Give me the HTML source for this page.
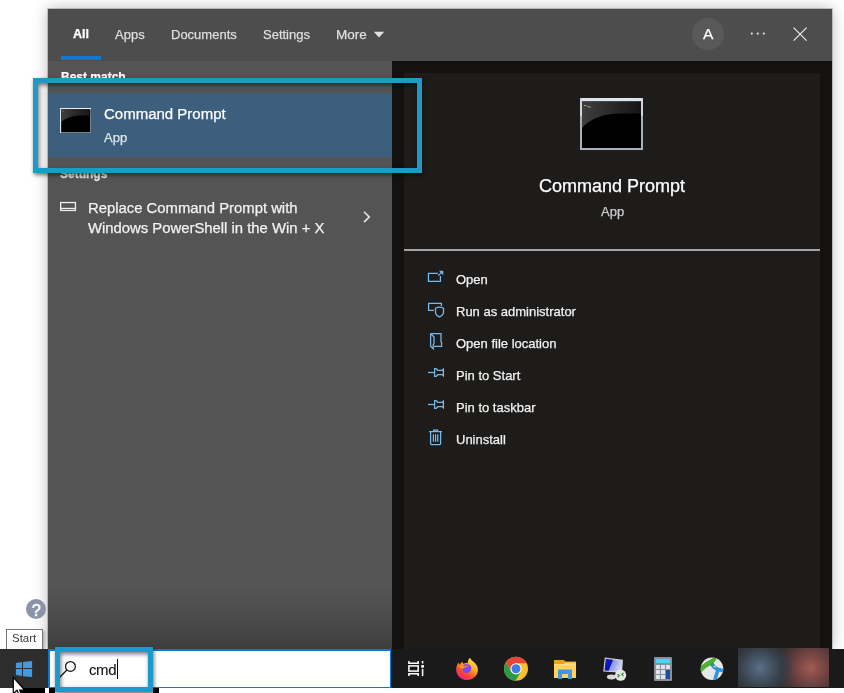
<!DOCTYPE html>
<html><head><meta charset="utf-8">
<style>
*{margin:0;padding:0;box-sizing:border-box}
html,body{width:844px;height:693px;overflow:hidden;background:#fff;font-family:"Liberation Sans",sans-serif}
.a{position:absolute}
svg.a{overflow:visible}
.t{position:absolute;white-space:nowrap;line-height:1;will-change:transform;-webkit-text-stroke:0.25px currentColor}
#panel{left:48px;top:9px;width:784px;height:640px;background:#4d4d4d;box-shadow:0 0 0 1px rgba(0,0,0,.18),0 0 14px rgba(0,0,0,.28)}
#left{left:48px;top:61px;width:344px;height:588px;background:linear-gradient(#545454 0,#555 89%,#4b4b4b 95%,#3e3e3e 100%)}
#right{left:392px;top:61px;width:440px;height:588px;background:#131210}
#rin{left:404px;top:73px;width:416px;height:576px;background:#1d1c1b}
.tab{font-size:13px;color:#dedede}
.act{font-size:13px;color:#f2f2f2}
.hl{border:5px solid #1c9ac8;box-shadow:1px 2px 4px rgba(0,0,0,.55),inset 1px 2px 4px rgba(0,0,0,.55)}
</style></head><body>
<div class="a" id="panel"></div>
<div class="a" id="left"></div>
<div class="a" id="right"></div>
<div class="a" id="rin"></div>

<!-- header tabs -->
<div class="t tab" style="left:73px;top:28px;font-weight:bold;color:#fff;font-size:12.5px">All</div>
<div class="a" style="left:61px;top:56px;width:40px;height:4px;background:#0f78d4"></div>
<div class="t tab" style="left:115px;top:28px">Apps</div>
<div class="t tab" style="left:171px;top:28px">Documents</div>
<div class="t tab" style="left:263px;top:28px">Settings</div>
<div class="t tab" style="left:336px;top:28px;font-size:13.5px;top:27.5px">More</div>
<svg class="a" style="left:373px;top:31px" width="12" height="7"><path d="M0.8 0.8h10.4L6 6.6z" fill="#e0e0e0"/></svg>

<div class="a" style="left:692px;top:18px;width:32px;height:32px;border-radius:50%;background:#595959"></div>
<div class="t" style="left:702.5px;top:26px;font-size:15.5px;color:#fff">A</div>
<svg class="a" style="left:750px;top:32px" width="16" height="4"><circle cx="1.8" cy="1.6" r="1.1" fill="#e6e6e6"/><circle cx="7.8" cy="1.6" r="1.1" fill="#e6e6e6"/><circle cx="13.8" cy="1.6" r="1.1" fill="#e6e6e6"/></svg>
<svg class="a" style="left:792px;top:26px" width="16" height="16"><path d="M1.6 1.6L14.6 14.6M14.6 1.6L1.6 14.6" stroke="#e6e6e6" stroke-width="1.3"/></svg>

<!-- left list -->
<div class="t" style="left:61px;top:70.8px;font-size:12px;font-weight:bold;color:#fff">Best match</div>
<div class="a" style="left:48px;top:93px;width:344px;height:64px;background:#3d5f7e"></div>
<svg class="a" style="left:60px;top:108px" width="31" height="25" viewBox="0 0 31 25">
 <defs><linearGradient id="gl" x1="0" y1="0" x2="1" y2="0"><stop offset="0" stop-color="#3e3e3e"/><stop offset="1" stop-color="#151515"/></linearGradient></defs>
 <rect x="0" y="0" width="31" height="25" fill="#9aa0a8"/>
 <rect x="0" y="0" width="31" height="1.3" fill="#eceef2"/>
 <rect x="0" y="0" width="1.2" height="25" fill="#e2e4e8"/>
 <rect x="1.2" y="1.3" width="29" height="22.9" fill="#000"/>
 <path d="M1.2 1.3H30.2V7.5H20Q7 7.8 1.2 14.5Z" fill="url(#gl)"/>
 <path d="M2.5 3.2h1" stroke="#bbb" stroke-width="0.7"/>
</svg>
<div class="t" style="left:104px;top:106px;font-size:15px;color:#fff">Command Prompt</div>
<div class="t" style="left:104px;top:131px;font-size:13px;color:#dfe5eb">App</div>

<div class="t" style="left:60px;top:167.8px;font-size:12px;font-weight:bold;color:#e6e6e6">Settings</div>
<svg class="a" style="left:56px;top:196px" width="24" height="24"><rect x="4.65" y="6.55" width="14.8" height="7.9" fill="none" stroke="#f0f0f0" stroke-width="1.3"/><path d="M4.65 12.4h14.8" stroke="#f0f0f0" stroke-width="1.2"/></svg>
<div class="t" style="left:88px;top:201.3px;font-size:14.85px;color:#f2f2f2">Replace Command Prompt with</div>
<div class="t" style="left:88px;top:221px;font-size:14.85px;color:#f2f2f2">Windows PowerShell in the Win + X</div>
<svg class="a" style="left:354px;top:205px" width="24" height="24"><path d="M10 6.75L15.2 12L10 17.2" fill="none" stroke="#e2e2e2" stroke-width="1.7"/></svg>

<!-- right detail -->
<svg class="a" style="left:580px;top:98px" width="63" height="52" viewBox="0 0 63 52">
 <rect x="0" y="0" width="63" height="52" fill="#aab0bc"/>
 <rect x="0" y="0" width="63" height="3.5" fill="#dfe3ea"/>
 <rect x="0" y="0" width="2" height="18" fill="#d0d4dc"/>
 <rect x="61" y="0" width="2" height="18" fill="#d0d4dc"/>
 <rect x="2" y="3.5" width="59" height="46.5" fill="#000"/>
 <path d="M2 3.5H61V15.5H40Q14 16 2 30Z" fill="url(#gl)"/>
 <path d="M4 7.5h2M7 7.5l1.5 1.5M8.5 9h2.5" stroke="#bbb" stroke-width="0.8"/>
</svg>
<div class="t" style="left:539px;top:177px;font-size:18px;color:#fff">Command Prompt</div>
<div class="t" style="left:600.5px;top:205px;font-size:13px;color:#cdcdcd">App</div>
<div class="a" style="left:404px;top:249px;width:416px;height:2px;background:#a4a4a4"></div>

<svg class="a" style="left:424px;top:266px" width="24" height="24" fill="none" stroke="#78b9ec" stroke-width="1.25">
 <path d="M13.9 7.4H4.45V15.45H16.45V9.9"/><path d="M14.3 9.6L18.4 5.5"/><path d="M15.6 5.1H19V8.6Z" fill="#78b9ec" stroke-width="0.6"/>
</svg>
<svg class="a" style="left:424px;top:298px" width="24" height="24" fill="none" stroke="#78b9ec" stroke-width="1.25">
 <path d="M9.9 12.4H4.6V5.45H17.4V8.1"/><path d="M11.5 10.2Q15.4 7.9 19.5 10.2V14Q19.5 17.3 15.4 18.9Q11.5 17.3 11.5 14Z"/>
</svg>
<svg class="a" style="left:424px;top:330px" width="24" height="24" fill="none" stroke="#78b9ec" stroke-width="1.25">
 <path d="M6.6 3.5H17V12L17.6 12.6V16.4H9.8"/><path d="M6.6 3.5V16.3L9.2 18.8V14.6L10 13.6V7L6.9 3.8"/>
</svg>
<svg class="a" style="left:424px;top:362px" width="24" height="24" fill="none" stroke="#78b9ec" stroke-width="1.25">
 <path d="M4 10.5H10.6"/><path d="M10.6 6.7V14.3H12.2L13.8 12.7H18.3L19.4 13.8V7.2L18.3 8.3H13.8L12.2 6.7Z"/>
</svg>
<svg class="a" style="left:424px;top:394px" width="24" height="24" fill="none" stroke="#78b9ec" stroke-width="1.25">
 <path d="M4 10.5H10.6"/><path d="M10.6 6.7V14.3H12.2L13.8 12.7H18.3L19.4 13.8V7.2L18.3 8.3H13.8L12.2 6.7Z"/>
</svg>
<svg class="a" style="left:424px;top:426px" width="24" height="24" fill="none" stroke="#78b9ec" stroke-width="1.25">
 <path d="M5 5.6H18"/><path d="M9.6 5.6V4H13.6V5.6"/><path d="M6.6 5.6V17.6Q6.6 18.6 7.6 18.6H15.6Q16.6 18.6 16.6 17.6V5.6"/><path d="M9.4 8.2V15.8M11.6 8.2V15.8M13.8 8.2V15.8"/>
</svg>
<div class="t act" style="left:456px;top:273.3px">Open</div>
<div class="t act" style="left:456px;top:305.3px">Run as administrator</div>
<div class="t act" style="left:456px;top:337.3px">Open file location</div>
<div class="t act" style="left:456px;top:369.3px">Pin to Start</div>
<div class="t act" style="left:456px;top:401.3px">Pin to taskbar</div>
<div class="t act" style="left:456px;top:433.3px">Uninstall</div>

<!-- page extras -->
<svg class="a" style="left:26px;top:599px" width="20" height="20"><circle cx="10" cy="10" r="10" fill="#8a94a4"/><text x="10.2" y="16.6" text-anchor="middle" font-family="Liberation Sans" font-size="16" fill="#fff" stroke="#fff" stroke-width="0.5">?</text></svg>
<div class="a" style="left:6px;top:629px;width:37px;height:21px;background:#fff;border:1px solid #767676;box-shadow:2px 2px 3px rgba(0,0,0,.25)"></div>
<div class="t" style="left:12px;top:632.5px;font-size:11.5px;color:#3a3a3a;-webkit-text-stroke:0">Start</div>

<!-- taskbar -->
<div class="a" style="left:0;top:649px;width:844px;height:39px;background:#1a1a1a"></div>
<div class="a" style="left:0;top:649px;width:48px;height:39px;background:#2d2d2d"></div>
<svg class="a" style="left:10px;top:655px" width="28" height="28" fill="#3e9be4">
 <path d="M5.9 7.9L12 7.1V12.9H5.9Z"/><path d="M13 6.9L22.1 5.9V12.9H13Z"/><path d="M5.9 13.9H12V21L5.9 20Z"/><path d="M13 13.9H22.1V22.1L13 21.2Z"/>
</svg>
<div class="a" style="left:48px;top:649px;width:343px;height:39px;background:#fff;border:2px solid #0a78d7;border-bottom-width:1px;border-right-width:1px"></div>
<svg class="a" style="left:56px;top:652px" width="30" height="30"><circle cx="14.45" cy="14.45" r="4.9" fill="none" stroke="#111" stroke-width="1.2"/><path d="M10.9 18L3 26" stroke="#111" stroke-width="1.2"/></svg>
<div class="t" style="left:88.6px;top:662.3px;font-size:15px;color:#111;letter-spacing:-0.4px;-webkit-text-stroke:0.1px #111">cmd</div>
<div class="a" style="left:117px;top:659px;width:1px;height:20px;background:#000"></div>

<!-- task view -->
<svg class="a" style="left:402px;top:655px" width="28" height="28" fill="none" stroke="#fff" stroke-width="1.5">
 <path d="M6.9 6V8.2H16.2V6"/><rect x="6.9" y="10.9" width="9.3" height="5.2"/><path d="M6.9 21V18.8H16.2V21"/><path d="M20.6 6V8.6M20.6 14V21"/><rect x="19.2" y="10.1" width="2.8" height="2.6" fill="#fff" stroke="none"/>
</svg>
<!-- firefox -->
<svg class="a" style="left:455px;top:657px" width="24" height="24" viewBox="0 0 24 24">
 <defs>
  <linearGradient id="ff1" x1="0.85" y1="0.1" x2="0.3" y2="1"><stop offset="0" stop-color="#ffe94a"/><stop offset="0.4" stop-color="#ffa21e"/><stop offset="0.7" stop-color="#ff4a2e"/><stop offset="1" stop-color="#e8207e"/></linearGradient>
  <radialGradient id="ff2" cx="0.4" cy="0.65" r="0.7"><stop offset="0" stop-color="#6a52e6"/><stop offset="1" stop-color="#9a3cf2"/></radialGradient>
 </defs>
 <path d="M12 23C5.8 23 1.2 18.4 1.2 12.4C1.2 9.4 2.3 7.2 3.6 5.5C3.8 6.6 4.3 7.4 4.8 7.8C5.4 6.4 6.3 5.4 7.3 4.8C7.4 5.8 7.8 6.4 8.4 6.8C9.8 6.1 11.4 5.9 12.8 6.2C12.6 4.3 13.6 2 15 0.8C15.8 2.8 17.8 4.2 19.6 5.8C21.8 8 22.9 10.4 22.9 12.8C22.9 18.6 18.2 23 12 23Z" fill="url(#ff1)"/>
 <circle cx="11.7" cy="11.6" r="4.6" fill="url(#ff2)"/>
 <path d="M3.6 9.8C5.6 8.6 8.4 8.6 10.2 9.6C10.8 8.6 12.4 8.2 13.6 8.8C12.4 9 11.6 9.6 11.2 10.6C9.6 10.2 8 10.8 7.4 12.4C6.2 11.2 4.9 10.4 3.6 9.8Z" fill="#ff9c1c"/>
</svg>
<!-- chrome -->
<svg class="a" style="left:504px;top:657px" width="24" height="24" viewBox="0 0 24 24">
 <circle cx="12" cy="11.8" r="12" fill="#fbc02d"/>
 <path d="M12 11.8L12.00 6.20L22.61 6.20A12 12 0 0 0 1.84 5.41L7.15 14.60Z" fill="#e5453a"/>
 <path d="M12 11.8L7.15 14.60L1.84 5.41A12 12 0 0 0 11.54 23.79L16.85 14.60Z" fill="#2a9c48"/>
 <circle cx="12" cy="11.8" r="5.6" fill="#fff"/>
 <circle cx="12" cy="11.8" r="4.5" fill="#3a7ee4"/>
</svg>
<!-- folder -->
<svg class="a" style="left:554px;top:660px" width="22" height="20" viewBox="0 0 22 20">
 <rect x="0" y="1.8" width="22" height="16.2" fill="#fdd35e"/>
 <path d="M0 0H9.8L11.6 1.8H22V2.2H11.2L9.6 4.2H0Z" fill="#e7a60c"/>
 <rect x="0" y="4.2" width="22" height="0.8" fill="#ffe08a"/>
 <path d="M4 19V10.3Q4 9.5 4.8 9.5H17.2Q18 9.5 18 10.3V19H14V14H8V19Z" fill="#3d99e6"/>
</svg>
<!-- rdp -->
<svg class="a" style="left:600px;top:655px" width="28" height="28" viewBox="0 0 28 28">
 <defs><linearGradient id="scr" x1="0" y1="0" x2="1" y2="0.3"><stop offset="0" stop-color="#1020c8"/><stop offset="0.45" stop-color="#0a14b8"/><stop offset="0.5" stop-color="#8896e8"/><stop offset="1" stop-color="#c8d2f4"/></linearGradient></defs>
 <path d="M4.8 2.4L23 4.8L22 17.8L3.2 16.6Z" fill="#cfcfcf"/>
 <path d="M5.8 3.8L21.8 5.9L21 16.6L4.5 15.5Z" fill="url(#scr)"/>
 <ellipse cx="11.5" cy="22" rx="4.6" ry="2.4" fill="#d8d8d8"/>
 <circle cx="20.6" cy="20.2" r="5.6" fill="#e6e6e6"/>
 <path d="M17.5 19.2L19.3 20.6L17.7 22.2M23.6 18L21.8 19.4L23.4 21" fill="none" stroke="#3a9a3c" stroke-width="1.3"/>
</svg>
<!-- calculator -->
<svg class="a" style="left:654px;top:657px" width="18" height="24" viewBox="0 0 18 24">
 <rect x="0" y="0" width="18" height="24" rx="1" fill="#8a9099"/>
 <rect x="2" y="2" width="14" height="4" fill="#4fd2f8"/>
 <g fill="#dfe3ea"><rect x="2" y="8" width="4" height="4"/><rect x="7" y="8" width="4" height="4"/><rect x="12" y="8" width="4" height="4"/><rect x="2" y="13" width="4" height="4"/><rect x="7" y="13" width="4" height="4"/><rect x="2" y="18" width="4" height="4"/><rect x="7" y="18" width="4" height="4"/></g>
 <rect x="12" y="13" width="4" height="9" fill="#1c4f9a"/>
</svg>
<!-- globe -->
<svg class="a" style="left:698px;top:655px" width="28" height="28" viewBox="0 0 28 28">
 <defs><clipPath id="gc"><circle cx="14" cy="13.7" r="11.3"/></clipPath>
 <linearGradient id="tb" x1="0" y1="0" x2="1" y2="1"><stop offset="0" stop-color="#2a9a6a"/><stop offset="0.5" stop-color="#2a8ad8"/><stop offset="1" stop-color="#2f9be6"/></linearGradient></defs>
 <circle cx="14" cy="13.7" r="11.3" fill="#e2e7ea"/>
 <g clip-path="url(#gc)" fill="none" stroke-linecap="butt">
  <path d="M0.5 16.5Q6.5 10 14.8 6" stroke="#52b02a" stroke-width="4.8"/>
  <path d="M12.2 10Q14.6 6 17.8 1.8" stroke="#4cad2e" stroke-width="3.6"/>
  <path d="M13.6 8.6Q15.6 13 20.2 14.6L26.5 16" stroke="url(#tb)" stroke-width="3.6"/>
  <path d="M20.3 14.2Q18.3 19.5 16.6 26" stroke="#2f93e0" stroke-width="3.6"/>
 </g>
 <ellipse cx="16.5" cy="11.8" rx="1.4" ry="0.7" fill="#d6e8e8" transform="rotate(35 16.5 11.8)"/>
</svg>
<!-- blurred icons -->
<div class="a" style="left:738px;top:648px;width:91px;height:39px;background:radial-gradient(ellipse 34px 32px at 22px 20px,#5b7088 0,#475768 30%,#353d45 65%,rgba(47,45,46,0) 100%),radial-gradient(ellipse 36px 36px at 73px 20px,#a05c53 0,#7f4a45 30%,#56393a 65%,rgba(47,45,46,0) 100%),#2c2b2c"></div>
<div class="a" style="left:0;top:688px;width:844px;height:5px;background:#fff"></div>
<div class="a" style="left:20px;top:688px;width:25px;height:5px;background:#000"></div>
<div class="a" style="left:49px;top:688px;width:6px;height:5px;background:#000"></div>
<div class="a" style="left:153px;top:688px;width:6px;height:5px;background:#000"></div>

<!-- cursor -->
<svg class="a" style="left:12px;top:676px" width="16" height="20"><path d="M1.3 1.3V17.8L5 14.2L7.6 20H10.2L7.6 14H12.6Z" fill="#fff" stroke="#000" stroke-width="1.2"/></svg>

<!-- highlight boxes -->
<div class="a hl" style="left:33px;top:78px;width:389px;height:95px"></div>
<div class="a hl" style="left:55px;top:647px;width:98px;height:45px"></div>
</body></html>
